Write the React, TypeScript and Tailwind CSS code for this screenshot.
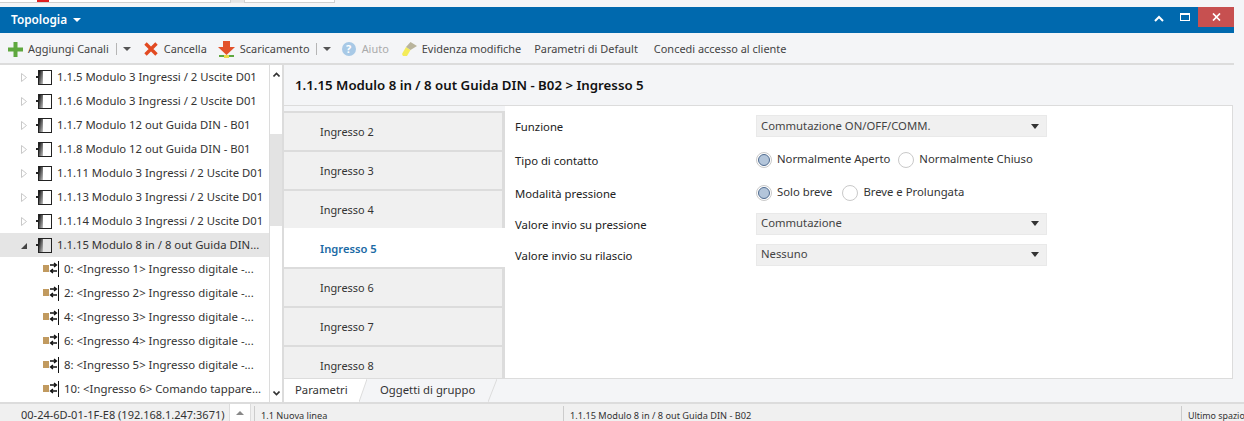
import React from 'react';

const sans = { fontFamily: '"Noto Sans", sans-serif' };

function ModuleIcon() {
  return (
    <svg width="16" height="15" viewBox="0 0 16 15" className="shrink-0">
      <defs>
        <linearGradient id="modgrad" x1="0" x2="1" y1="0.2" y2="0.8">
          <stop offset="0" stopColor="#000" />
          <stop offset="1" stopColor="#b5b5b5" />
        </linearGradient>
      </defs>
      <rect x="0" y="6" width="2" height="2" fill="#222" />
      <rect x="2" y="1" width="5" height="13" fill="url(#modgrad)" />
      <rect x="2.500" y="0.500" width="13" height="14" fill="none" stroke="#222" />
    </svg>
  );
}

function ObjectIcon() {
  return (
    <svg width="16" height="16" viewBox="0 0 16 16" className="shrink-0">
      <rect x="0" y="4" width="6" height="7" fill="#c19a5f" />
      <path d="M7 4h6M11 2l2.500 2L11 6M14 10H8M10 8l-2.500 2 2.500 2" fill="none" stroke="#111" strokeWidth="1.300" />
      <rect x="15" y="0" width="1" height="16" fill="#111" />
    </svg>
  );
}

function TreeRow({ label, open }: { label: string; open?: boolean }) {
  return (
    <div className={`flex h-6 items-center shrink-0 pl-[21px] ${open ? 'bg-[#e5e5e5]' : ''}`}>
      <svg width="7" height="9" viewBox="0 0 7 9" className="mr-[8px] shrink-0">
        {open ? (
          <path d="M0 8h6V2z" fill="#444" />
        ) : (
          <path d="M0.500 0.500v8l5-4z" fill="#fff" stroke="#c8c8c8" />
        )}
      </svg>
      <ModuleIcon />
      <span className="ml-[5px] whitespace-nowrap text-[#333]">{label}</span>
    </div>
  );
}

function ObjectRow({ label }: { label: string }) {
  return (
    <div className="flex h-6 items-center shrink-0 pl-[43px]">
      <ObjectIcon />
      <span className="ml-[5px] whitespace-nowrap text-[11.400px] text-[#333]">{label}</span>
    </div>
  );
}

function Caret() {
  return <span className="w-0 h-0 border-x-[4px] border-x-transparent border-t-[4px] border-t-[#555]" />;
}

function Sep() {
  return <span className="w-px h-[12px] bg-[#b5b5b5] ml-[6px] mr-[6px]" />;
}

function SelectBox({ value }: { value: string }) {
  return (
    <div className="flex h-[22px] w-[291px] items-center justify-between bg-[#f0f0f0] border border-[#e9e9e9] pl-[4px] pr-[7px] text-[#444]">
      <span>{value}</span>
      <span className="w-0 h-0 border-x-[4.5px] border-x-transparent border-t-[5px] border-t-[#333]" />
    </div>
  );
}

function Radio({ on, label }: { on?: boolean; label: string }) {
  return (
    <div className="flex items-center">
      <span className="flex h-4 w-4 items-center justify-center rounded-full border border-[#c9c9c9] bg-white">
        {on && <span className="h-3 w-3 rounded-full border border-[#4f6b8f] bg-[#b3c5da]" />}
      </span>
      <span className="ml-[5px] text-[#333]">{label}</span>
    </div>
  );
}

function FormRow({ label, h, children }: { label: string; h: string; children: React.ReactNode }) {
  return (
    <div className={`flex items-center ${h}`}>
      <span className="w-[241px] pt-[3px] text-[#222]">{label}</span>
      {children}
    </div>
  );
}

export default function App() {
  const ingressi = ['Ingresso 2', 'Ingresso 3', 'Ingresso 4', 'Ingresso 5', 'Ingresso 6', 'Ingresso 7', 'Ingresso 8'];
  return (
    <div className="flex h-[421px] w-[1244px] flex-col overflow-hidden bg-[#f4f5f7] text-[11.3px]" style={sans}>
      {/* pezzo di finestra dietro */}
      <div className="flex h-[7px] shrink-0 bg-[#f4f5f7]">
        <div className="relative h-[3px] w-[231px] bg-white border-b border-r border-[#d0d0d0]">
          <span className="absolute left-[37px] top-0 h-[2px] w-[12px] bg-[#e02020]" />
        </div>
        <div className="h-[3px] w-[14px] bg-[#e6e6e6] border-r border-[#d0d0d0]" />
        <div className="h-[3px] w-[90px] bg-white border-b border-r border-[#d0d0d0]" />
      </div>

      <div className="flex h-[26px] w-[1234px] shrink-0 items-start justify-between bg-[#0069ae] pl-[11px] text-white">
        <div className="flex h-full items-center font-semibold text-[11.800px]">
          Topologia
          <span className="ml-[6px] w-0 h-0 border-x-[4px] border-x-transparent border-t-[4px] border-t-white" />
        </div>
        <div className="flex items-center">
          <svg width="10" height="7" viewBox="0 0 10 7" className="mr-[16px] mt-[3px]">
            <path d="M1 6l4-4 4 4" fill="none" stroke="#fff" strokeWidth="2" />
          </svg>
          <span className="mr-[8px] h-[8px] w-[10px] border border-t-2 border-white" />
          <span className="flex h-[20px] w-[36px] items-center justify-center bg-[#c75050]">
            <svg width="9" height="8" viewBox="0 0 9 8">
              <path d="M1 0.500l7 7M8 0.500l-7 7" stroke="#fff" strokeWidth="1.700" />
            </svg>
          </span>
        </div>
      </div>

      <div className="flex h-[32px] w-[1234px] shrink-0 items-center border-b-2 border-[#dcdcdc] pl-[8px] pt-[2px] text-[10.950px] text-[#444]">
        <svg width="15" height="15" viewBox="0 0 15 15">
          <path d="M5.500 0h4v5.500H15v4H9.500V15h-4V9.500H0v-4h5.500z" fill="#5fa83f" />
        </svg>
        <span className="ml-[5px] mr-[1px]">Aggiungi Canali</span>
        <Sep />
        <Caret />
        <svg width="14" height="14" viewBox="0 0 14 14" className="ml-[13px]">
          <path d="M1.500 1.500l11 11M12.500 1.500l-11 11" stroke="#e24a22" strokeWidth="3.400" />
        </svg>
        <span className="ml-[6px]">Cancella</span>
        <svg width="17" height="17" viewBox="0 0 17 17" className="ml-[11px]">
          <path d="M5 0h7v6h5l-8.500 8L0 6h5z" fill="#e2522b" />
          <rect x="1" y="14" width="5" height="2" fill="#5fa83f" />
          <rect x="6" y="14" width="5" height="3" fill="#e9dc4a" />
          <rect x="11" y="14" width="5" height="2" fill="#5fa83f" />
        </svg>
        <span className="ml-[5px]">Scaricamento</span>
        <Sep />
        <Caret />
        <span className="ml-[11px] flex h-[14px] w-[14px] items-center justify-center rounded-full bg-[#a8c9e6] text-[11px] font-bold text-white">?</span>
        <span className="ml-[6px] text-[#aaa]">Aiuto</span>
        <svg width="15" height="15" viewBox="0 0 15 15" className="ml-[13px]">
          <path d="M0 12l4-7 4.500 3-3.500 6H1z" fill="#f4ec5a" />
          <path d="M4 5l4.500-5L15 4l-6.500 4z" fill="#b9b49c" />
        </svg>
        <span className="ml-[5px]">Evidenza modifiche</span>
        <span className="ml-[13px]">Parametri di Default</span>
        <span className="ml-[16px]">Concedi accesso al cliente</span>
      </div>

      <div className="flex h-[337px] shrink-0">
        {/* albero */}
        <div className="flex h-full w-[269px] shrink-0 flex-col overflow-hidden bg-white">
          <TreeRow label="1.1.5 Modulo 3 Ingressi / 2 Uscite D01" />
          <TreeRow label="1.1.6 Modulo 3 Ingressi / 2 Uscite D01" />
          <TreeRow label="1.1.7 Modulo 12 out Guida DIN - B01" />
          <TreeRow label="1.1.8 Modulo 12 out Guida DIN - B01" />
          <TreeRow label="1.1.11 Modulo 3 Ingressi / 2 Uscite D01" />
          <TreeRow label="1.1.13 Modulo 3 Ingressi / 2 Uscite D01" />
          <TreeRow label="1.1.14 Modulo 3 Ingressi / 2 Uscite D01" />
          <TreeRow label="1.1.15 Modulo 8 in / 8 out Guida DIN..." open />
          <ObjectRow label="0: <Ingresso 1> Ingresso digitale -..." />
          <ObjectRow label="2: <Ingresso 2> Ingresso digitale -..." />
          <ObjectRow label="4: <Ingresso 3> Ingresso digitale -..." />
          <ObjectRow label="6: <Ingresso 4> Ingresso digitale -..." />
          <ObjectRow label="8: <Ingresso 5> Ingresso digitale -..." />
          <ObjectRow label="10: <Ingresso 6> Comando tappare..." />
        </div>

        {/* scrollbar */}
        <div className="flex h-full w-[15px] shrink-0 flex-col bg-white border-l border-r-2 border-[#dcdcdc]">
          <div className="flex h-[69px] shrink-0 justify-center pt-[7px]">
            <svg width="7" height="5" viewBox="0 0 7 5"><path d="M0.500 4.500l3-3 3 3" fill="none" stroke="#333" strokeWidth="1.600" /></svg>
          </div>
          <div className="h-[92px] shrink-0 bg-[#e3e3e3]" />
          <div className="flex flex-1 items-end justify-center pb-[6px]">
            <svg width="7" height="5" viewBox="0 0 7 5"><path d="M0.500 0.500l3 3 3-3" fill="none" stroke="#333" strokeWidth="1.600" /></svg>
          </div>
        </div>

        <div className="flex h-full min-w-0 flex-1 flex-col">
          <div className="flex h-[41px] w-[949px] shrink-0 items-center border-b border-[#dcdcdc] pl-[11px] pt-[1px] text-[13.250px] font-semibold text-[#111]">
            1.1.15 Modulo 8 in / 8 out Guida DIN - B02 &gt; Ingresso 5
          </div>
          <div className="flex h-[273px] w-[949px] shrink-0 border-b border-r border-[#dcdcdc]">
            <div className="flex w-[221px] shrink-0 flex-col overflow-hidden pt-[5px]">
              {ingressi.map((name) =>
                name === 'Ingresso 5' ? (
                  <div key={name} className="flex h-[39px] shrink-0 items-center bg-white pl-[36px] pt-[4px] font-semibold text-[11.200px] text-[#1b6aa5]">
                    {name}
                  </div>
                ) : (
                  <div key={name} className="flex h-[39px] shrink-0 items-center border-t-2 border-r-[3px] border-[#dcdcdc] bg-[#f0f0f0] pl-[36px] pt-[2px] text-[10.900px] text-[#333]">
                    {name}
                  </div>
                ),
              )}
            </div>
            <div className="flex-1 bg-white pl-[10px] pt-[4px]">
              <FormRow label="Funzione" h="h-[32px]"><SelectBox value="Commutazione ON/OFF/COMM." /></FormRow>
              <FormRow label="Tipo di contatto" h="h-[35px]">
                <Radio on label="Normalmente Aperto" />
                <span className="w-[8px]" />
                <Radio label="Normalmente Chiuso" />
              </FormRow>
              <FormRow label="Modalità pressione" h="h-[31px]">
                <Radio on label="Solo breve" />
                <span className="w-[10px]" />
                <Radio label="Breve e Prolungata" />
              </FormRow>
              <FormRow label="Valore invio su pressione" h="h-[31px]"><SelectBox value="Commutazione" /></FormRow>
              <FormRow label="Valore invio su rilascio" h="h-[31px]"><SelectBox value="Nessuno" /></FormRow>
            </div>
          </div>
          <div className="flex h-[23px] shrink-0 text-[#333]">
            <div className="flex h-[23px] w-[75px] items-center bg-white pl-[11px]">Parametri</div>
            <svg width="8" height="23" viewBox="0 0 8 23" className="shrink-0">
              <path d="M0 0h8L0 23z" fill="#fff" />
              <path d="M8 0L0 23" stroke="#dcdcdc" fill="none" />
            </svg>
            <div className="flex h-[23px] w-[121px] items-center pl-[13px]">Oggetti di gruppo</div>
            <svg width="9" height="23" viewBox="0 0 9 23" className="shrink-0">
              <path d="M9 0L0 23" stroke="#dcdcdc" fill="none" />
            </svg>
          </div>
        </div>
      </div>

      {/* barra di stato */}
      <div className="flex h-[19px] shrink-0 border-t-2 border-[#dcdcdc] bg-[#f0f0f0] text-[#333]">
        <div className="w-[229px] shrink-0 pl-[21px] pt-[3px] text-[11px] whitespace-nowrap">00-24-6D-01-1F-E8 (192.168.1.247:3671)</div>
        <div className="flex h-full w-[22px] shrink-0 items-center justify-center bg-white border-x border-[#dcdcdc]">
          <span className="w-0 h-0 border-x-[4px] border-x-transparent border-b-[4px] border-b-[#888]" />
        </div>
        <div className="ml-[3px] mt-[2px] flex w-[309px] shrink-0 items-center border-l border-[#ccc] pl-[6px] pt-[5px] text-[9.200px]">1.1 Nuova linea</div>
        <div className="mt-[2px] flex w-[618px] shrink-0 items-center border-l border-[#ccc] pl-[6px] pt-[5px] text-[9.200px]">1.1.15 Modulo 8 in / 8 out Guida DIN - B02</div>
        <div className="mt-[2px] flex min-w-0 flex-1 items-center border-l border-[#ccc] pl-[6px] pt-[5px] text-[8.900px] whitespace-nowrap">Ultimo spazio</div>
      </div>
    </div>
  );
}
